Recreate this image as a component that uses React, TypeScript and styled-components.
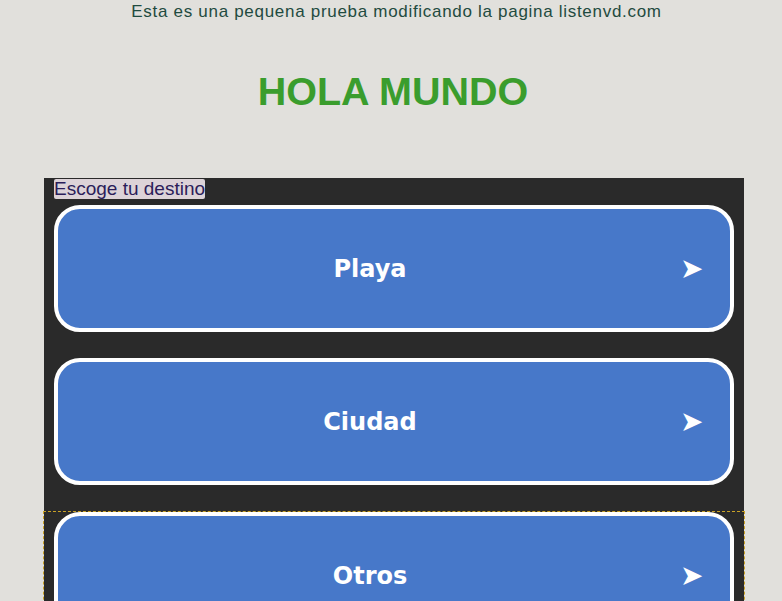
import React from "react";
import styled, { createGlobalStyle } from "styled-components";

const Global = createGlobalStyle`
  html, body { margin: 0; padding: 0; }
  body {
    background: #e1e0dc;
    font-family: "Liberation Sans", Arial, sans-serif;
    overflow: hidden;
  }
`;

const Page = styled.div`
  display: flex;
  flex-direction: column;
  align-items: stretch;
`;

const Tagline = styled.p`
  margin: 2px 0 0;
  padding-left: 11px;
  text-align: center;
  font-family: "Liberation Sans", Arial, sans-serif;
  font-size: 17px;
  letter-spacing: 0.7px;
  line-height: 20px;
  color: #1f4b40;
`;

const Title = styled.h1`
  margin: 46px 0 0;
  text-align: center;
  font-family: "Liberation Sans", Arial, sans-serif;
  font-weight: bold;
  font-size: 39.5px;
  line-height: 46px;
  color: #3a9d2d;
  padding-left: 4px;
`;

const Panel = styled.section`
  margin: 64px 0 0 44px;
  width: 700px;
  background: #2a2a2a;
  padding: 1px 0 40px;
  display: flex;
  flex-direction: column;
`;

const Label = styled.span`
  align-self: flex-start;
  margin-left: 10px;
  background: #dcd3d8;
  color: #2b1d5a;
  font-size: 19px;
  line-height: 20px;
  border-radius: 2px;
`;

const List = styled.div`
  display: flex;
  flex-direction: column;
  gap: 26px;
  margin-top: 6px;
`;

const Item = styled.div<{ $focused?: boolean }>`
  padding: 0 10px;
  margin-top: ${(p) => (p.$focused ? "1px" : "0")};
  outline: ${(p) => (p.$focused ? "1px dashed #c9a227" : "none")};
`;

const Choice = styled.button`
  width: 680px;
  height: 127px;
  box-sizing: border-box;
  border: 4px solid #ffffff;
  border-radius: 26px;
  background: #4778c9;
  display: flex;
  align-items: center;
  padding: 0;
  cursor: pointer;
  color: #ffffff;
`;

const ChoiceText = styled.span`
  flex: 1;
  padding-left: 2px;
  text-align: center;
  font-family: "DejaVu Sans", Verdana, sans-serif;
  font-weight: bold;
  font-size: 24px;
  color: #ffffff;
`;

const Arrow = styled.span`
  width: 50px;
  text-align: left;
  font-family: "DejaVu Sans", sans-serif;
  font-size: 28px;
  line-height: 28px;
  color: #ffffff;
`;

const options = ["Playa", "Ciudad", "Otros"];

export default function App() {
  return (
    <Page>
      <Global />
      <Tagline>Esta es una pequena prueba modificando la pagina listenvd.com</Tagline>
      <Title>HOLA MUNDO</Title>
      <Panel>
        <Label>Escoge tu destino</Label>
        <List>
          {options.map((o, i) => (
            <Item key={o} $focused={i === 2}>
              <Choice>
                <ChoiceText>{o}</ChoiceText>
                <Arrow>➤</Arrow>
              </Choice>
            </Item>
          ))}
        </List>
      </Panel>
    </Page>
  );
}
